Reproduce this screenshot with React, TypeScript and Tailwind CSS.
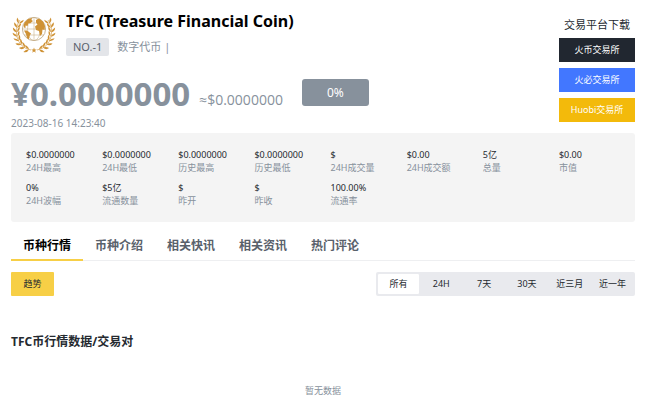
import React, { useState } from 'react';

const stats = [
  ['$0.0000000', '24H最高'],
  ['$0.0000000', '24H最低'],
  ['$0.0000000', '历史最高'],
  ['$0.0000000', '历史最低'],
  ['$', '24H成交量'],
  ['$0.00', '24H成交额'],
  ['5亿', '总量'],
  ['$0.00', '市值'],
  ['0%', '24H波幅'],
  ['$5亿', '流通数量'],
  ['$', '昨开'],
  ['$', '昨收'],
  ['100.00%', '流通率'],
];

const tabs = ['币种行情', '币种介绍', '相关快讯', '相关资讯', '热门评论'];
const periods = ['所有', '24H', '7天', '30天', '近三月', '近一年'];

const exchanges = [
  { name: '火币交易所', color: 'bg-[#212730]' },
  { name: '火必交易所', color: 'bg-[#4277ff]' },
  { name: 'Huobi交易所', color: 'bg-[#f3ba0b]' },
];

// Leaf positions along the right-hand laurel branch: x, y, direction of growth.
const leaves = [
  [28, 37.5, -12],
  [32, 35.5, -30],
  [35.5, 32.5, -46],
  [38, 28.8, -60],
  [39.6, 24.6, -74],
  [40.2, 20.2, -86],
  [39.8, 15.8, -98],
  [38.2, 11.6, -112],
];

function Branch() {
  return (
    <g>
      <path d="M26 38Q37 36 40 25Q42 15 37 8" fill="none" stroke="#cf9235" strokeWidth="0.6" />
      {leaves.map(([x, y, angle]) => (
        <g key={y} transform={`translate(${x} ${y}) rotate(${angle})`}>
          <path d="M0 0Q3.2 0.6 5 3.6Q1 4 0 0Z" />
          <path d="M0 0Q3.2 -0.6 5.4 -3.2Q1.6 -3.8 0 0Z" />
        </g>
      ))}
    </g>
  );
}

function CoinLogo() {
  return (
    <svg viewBox="0 0 46 42" className="h-[42px] w-[46px] shrink-0" fill="#cf9235" role="img" aria-label="TFC">
      <Branch />
      <g transform="translate(46 0) scale(-1 1)">
        <Branch />
      </g>
      <circle cx="23" cy="17" r="11.6" fill="#fff" stroke="#b9a27c" strokeWidth="0.8" />
      <g fill="none" stroke="#cbb28a" strokeWidth="0.6">
        <path d="M23 5.4V28.6M11.4 17H34.6M13 11H33M13 23H33" />
        <ellipse cx="23" cy="17" rx="6.5" ry="11.6" />
      </g>
      <path d="M12.5 13L14 10L17 7L21 6L20.5 8L22 9L19 11.5L17.5 11L16.5 14L14.5 13.5L14.5 16L13 15.5Z" />
      <path d="M13 18.5L16 18.5L20 21.5L18.5 24L18 27.5L16 26L15 22Z" />
      <path d="M25 8L28 6.4L32 9.5L34 14L33.6 18L31.5 17.5L31 22L29 24L28 19L25 18L24 14.5L26.5 12.5L25 10.5Z" />
      <path d="M23 35.5L23.7 37.4L25.8 37.4L24.1 38.7L24.8 40.7L23 39.5L21.2 40.7L21.9 38.7L20.2 37.4L22.3 37.4Z" />
    </svg>
  );
}

export default function App() {
  const [tab, setTab] = useState(tabs[0]);
  const [period, setPeriod] = useState(periods[0]);

  return (
    <main className="bg-white pt-3 pr-[15px] pl-[11px] font-['Noto_Sans','Noto_Sans_CJK_SC',sans-serif] text-[9px] text-[#252a30]">
      <header className="flex justify-between">
        <div>
          <div className="flex gap-[9px]">
            <CoinLogo />
            <div>
              <h1 className="text-[16px] leading-[18px] font-bold text-black">TFC (Treasure Financial Coin)</h1>
              <div className="mt-2 flex items-center gap-2 text-[11px] leading-[18px] text-[#87919c]">
                <span className="rounded-xs bg-[#e3e5e9] px-[7px] text-[#59616b]">NO.-1</span>
                <span>数字代币 |</span>
              </div>
            </div>
          </div>
          <div className="mt-4 flex items-end text-[#87919c]">
            <strong className="text-[33px] leading-[44px] font-bold">¥0.0000000</strong>
            <span className="ml-[9px] pb-1.5 font-['Open_Sans','Noto_Sans',sans-serif] text-[14px] leading-[20px]">
              ≈$0.0000000
            </span>
            <span className="mb-[10px] ml-[19px] w-[67px] rounded-[3px] bg-[#87919c] text-center text-[12px] leading-[27px] text-white">
              0%
            </span>
          </div>
          <time className="block pt-px text-[10px] leading-[13px] text-[#87919c]" dateTime="2023-08-16T14:23:40">
            2023-08-16 14:23:40
          </time>
        </div>
        <nav aria-label="交易平台下载" className="flex w-[76px] flex-col gap-1.5 text-center">
          <p className="mt-1 mb-[-2px] text-[11px] leading-[18px]">交易平台下载</p>
          {exchanges.map((e) => (
            <a key={e.name} href="#" className={`${e.color} block leading-[24px] text-white`}>
              {e.name}
            </a>
          ))}
        </nav>
      </header>

      <dl className="mt-[3px] grid grid-cols-8 gap-y-[7px] rounded-[3px] bg-[#f4f4f4] pt-[15px] pb-[15px] pl-[15px] leading-[13px]">
        {stats.map(([value, label]) => (
          <div key={label} className="flex flex-col-reverse whitespace-nowrap">
            <dt className="text-[#87919c]">{label}</dt>
            <dd>{value}</dd>
          </div>
        ))}
      </dl>

      <div role="tablist" className="mt-2 flex border-b border-[#eeeff1]">
        {tabs.map((t) => (
          <button
            key={t}
            role="tab"
            aria-selected={t === tab}
            onClick={() => setTab(t)}
            className={`-mb-px border-b-2 px-3 pt-[3px] text-[12px] leading-[26px] font-bold ${
              t === tab ? 'border-[#f7cf46] text-black' : 'border-transparent text-[#59616b]'
            }`}
          >
            {t}
          </button>
        ))}
      </div>

      <div className="mt-[11px] flex justify-between">
        <button className="w-[43px] rounded-[1px] bg-[#f7cf46] leading-[24px]">趋势</button>
        <div className="flex w-[259px] rounded-xs bg-[#e9eaee] p-px">
          {periods.map((p) => (
            <button
              key={p}
              aria-pressed={p === period}
              onClick={() => setPeriod(p)}
              className={`flex-1 rounded-xs border border-[#e9eaee] leading-[20px] ${p === period ? 'bg-white' : ''}`}
            >
              {p}
            </button>
          ))}
        </div>
      </div>

      <section>
        <h2 className="mt-[37px] text-[12px] leading-[18px] font-bold">TFC币行情数据/交易对</h2>
        <p className="mt-[33px] text-center leading-[14px] text-[#87919c]">暂无数据</p>
      </section>
    </main>
  );
}
